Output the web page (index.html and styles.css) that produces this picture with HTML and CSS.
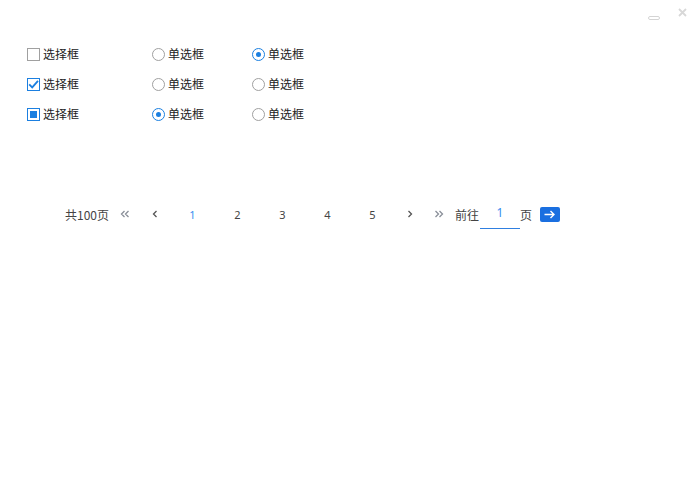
FILE: index.html
```html
<!DOCTYPE html>
<html>
<head>
<meta charset="utf-8">
<link rel="stylesheet" href="styles.css">
</head>
<body>
<div class="window">
  <div class="titlebar">
    <span class="win-btn min"><svg width="12" height="4" viewBox="0 0 12 4"><rect x="0.5" y="0.5" width="11" height="3" rx="1.5" fill="none" stroke="#d4d4d4" stroke-width="1"/></svg></span>
    <span class="win-btn close"><svg width="9" height="9" viewBox="0 0 9 9"><path d="M1 1L8 8M8 1L1 8" stroke="#d8d8d8" stroke-width="1.8" fill="none"/></svg></span>
  </div>
  <div class="options">
    <div class="row">
      <label class="item c1"><span class="cb"></span>选择框</label>
      <label class="item c2"><span class="rd"></span>单选框</label>
      <label class="item c3"><span class="rd on"></span>单选框</label>
    </div>
    <div class="row">
      <label class="item c1"><span class="cb checked"><svg width="13" height="13" viewBox="0 0 13 13"><path d="M2.2 6.4L5.2 9.4L11 2.8" stroke="#1b7fe0" stroke-width="1.8" fill="none"/></svg></span>选择框</label>
      <label class="item c2"><span class="rd"></span>单选框</label>
      <label class="item c3"><span class="rd"></span>单选框</label>
    </div>
    <div class="row">
      <label class="item c1"><span class="cb part"><span class="fill"></span></span>选择框</label>
      <label class="item c2"><span class="rd on"></span>单选框</label>
      <label class="item c3"><span class="rd"></span>单选框</label>
    </div>
  </div>
  <div class="pager">
    <span class="total">共100页</span>
    <span class="pi arrow w30"><svg width="10" height="8" viewBox="0 0 10 8"><path d="M4.5 1L1.5 4L4.5 7M8.5 1L5.5 4L8.5 7" stroke="#8a8f99" stroke-width="1.3" fill="none"/></svg></span>
    <span class="pi arrow w30"><svg width="6" height="8" viewBox="0 0 6 8"><path d="M4.5 1L1.5 4L4.5 7" stroke="#555" stroke-width="1.3" fill="none"/></svg></span>
    <span class="pi num active">1</span>
    <span class="pi num">2</span>
    <span class="pi num">3</span>
    <span class="pi num">4</span>
    <span class="pi num">5</span>
    <span class="pi arrow w30"><svg width="6" height="8" viewBox="0 0 6 8"><path d="M1.5 1L4.5 4L1.5 7" stroke="#555" stroke-width="1.3" fill="none"/></svg></span>
    <span class="pi arrow w28"><svg width="10" height="8" viewBox="0 0 10 8"><path d="M1.5 1L4.5 4L1.5 7M5.5 1L8.5 4L5.5 7" stroke="#8a8f99" stroke-width="1.3" fill="none"/></svg></span>
    <span class="goto">前往</span>
    <span class="jump">1</span>
    <span class="unit">页</span>
    <span class="go"><svg width="12" height="9" viewBox="0 0 12 9"><path d="M0.5 4.5H10M6.5 1L10 4.5L6.5 8" stroke="#fff" stroke-width="1.4" fill="none"/></svg></span>
  </div>
</div>
</body>
</html>
```
FILE: styles.css
```css
html, body {
  margin: 0;
  padding: 0;
  background: #fff;
}
body {
  font-family: "Noto Sans CJK SC", "Noto Sans", sans-serif;
  color: #333;
  font-size: 12px;
}
.window {
  width: 697px;
  height: 499px;
  position: relative;
}
.titlebar {
  height: 39px;
  display: flex;
  justify-content: flex-end;
  align-items: flex-start;
  padding-right: 10px;
  box-sizing: border-box;
}
.win-btn {
  display: flex;
}
.win-btn.min {
  margin-top: 16px;
  margin-right: 18px;
}
.win-btn.close {
  margin-top: 8px;
}
.options {
  padding-left: 27px;
}
.row {
  display: flex;
  height: 30px;
  align-items: center;
}
.item {
  display: flex;
  align-items: center;
  font-size: 12px;
  color: #222;
  line-height: 16px;
}
.c1 { width: 125px; }
.c2 { width: 100px; }
.c3 { width: 100px; }
.cb {
  width: 13px;
  height: 13px;
  box-sizing: border-box;
  border: 1px solid #a0a0a0;
  margin-right: 3px;
  display: flex;
  align-items: center;
  justify-content: center;
  position: relative;
}
.cb.checked {
  border-color: #1b7fe0;
}
.cb.checked svg {
  position: absolute;
  left: -1px;
  top: -1px;
}
.cb.part {
  border-color: #1b7fe0;
}
.cb.part .fill {
  width: 7px;
  height: 7px;
  background: #1b7fe0;
}
.rd {
  width: 13px;
  height: 13px;
  box-sizing: border-box;
  border: 1px solid #a0a0a0;
  border-radius: 50%;
  margin-right: 3px;
  display: flex;
  align-items: center;
  justify-content: center;
}
.rd.on {
  border-color: #1b7fe0;
}
.rd.on::after {
  content: "";
  width: 5px;
  height: 5px;
  border-radius: 50%;
  background: #1b7fe0;
}
.pager {
  margin-top: 70px;
  padding-left: 65px;
  display: flex;
  align-items: center;
  height: 30px;
}
.total {
  width: 45px;
  font-size: 12px;
  color: #444;
}
.pi {
  display: flex;
  justify-content: center;
  align-items: center;
  height: 20px;
}
.w30 { width: 30px; }
.w28 { width: 28px; }
.num {
  width: 45px;
  font-family: "Noto Sans", sans-serif;
  font-size: 11px;
  color: #444;
}
.num.active {
  color: #3a8ef0;
}
.goto {
  margin-left: 2px;
  width: 25px;
  color: #444;
}
.jump {
  width: 40px;
  height: 28px;
  box-sizing: border-box;
  border-bottom: 1px solid #2f7fe0;
  display: flex;
  justify-content: center;
  align-items: center;
  padding-bottom: 3px;
  color: #3a8ef0;
  font-family: "Noto Sans", sans-serif;
  font-size: 12px;
  margin-top: 1px;
}
.unit {
  width: 12px;
  color: #444;
}
.go {
  margin-left: 8px;
  width: 20px;
  height: 15px;
  border-radius: 2px;
  background: #1a6fe0;
  display: flex;
  justify-content: center;
  align-items: center;
}
```
